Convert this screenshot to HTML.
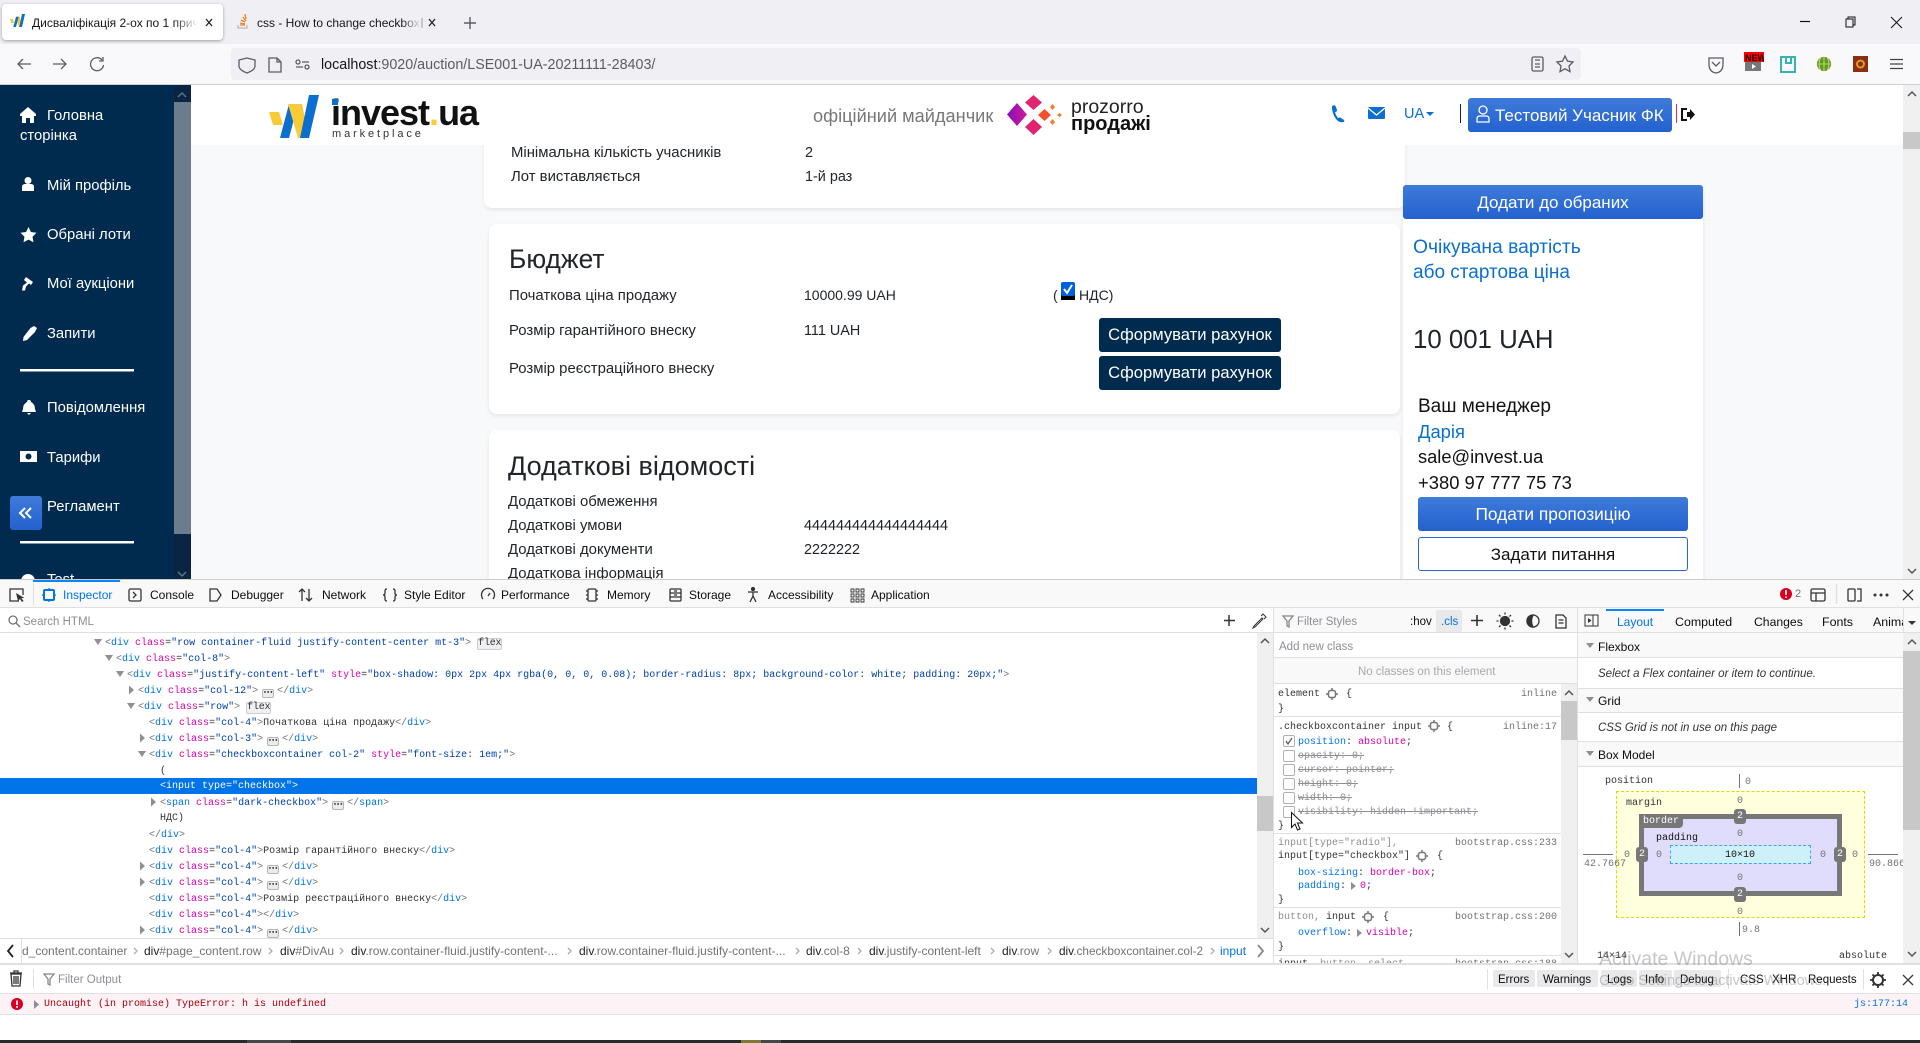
<!DOCTYPE html>
<html><head><meta charset="utf-8"><title>Дисваліфікація</title>
<style>
html,body{margin:0;padding:0;width:1920px;height:1043px;overflow:hidden;background:#fff;font-family:"Liberation Sans","Noto Sans CJK SC",sans-serif}
div,span.a{position:absolute}
.t{position:absolute;white-space:nowrap;line-height:16px;height:16px}
.r{position:absolute;box-sizing:border-box}
.side{color:#fff;font-size:14.8px;left:47px;margin-top:1px}
.pg{color:#212529;font-size:14.9px;margin-top:1px}
.val{font-size:14.4px}
.btn{position:absolute;box-sizing:border-box;text-align:center;color:#fff;background:linear-gradient(#3f7bd9,#2361cf);border-radius:3px;font-size:17px;line-height:35px}
.dark{position:absolute;box-sizing:border-box;left:1099px;width:182px;height:34px;text-align:center;color:#fff;background:#002a4e;border-radius:3px;font-size:16.6px;line-height:34px}
.card{position:absolute;background:#fff;border-radius:8px;box-shadow:0 2px 4px rgba(0,0,0,.08)}
.dv{font-size:12px;color:#0c0c0d}
.m{font-family:"Liberation Mono",monospace;font-size:10px;color:#333;position:absolute;white-space:pre;line-height:16px;height:16px;margin-top:2px}
.n{color:#0074e8}.k{color:#dd00a9}.v{color:#003eaa}.g{color:#737373}
.bd{display:inline-block;font-weight:normal;background:#f0f0f2;border:1px solid #cfcfd3;border-radius:2px;line-height:10px;height:10px;padding:0;letter-spacing:-.2px;color:#333;margin-left:6px;vertical-align:0}
.el{display:inline-block;box-sizing:border-box;font-weight:bold;background:#ececee;border:1px solid #b5b5b8;border-radius:2px;line-height:7px;height:9px;width:12px;text-align:center;font-size:5px;font-family:"DejaVu Sans",sans-serif;color:#333;vertical-align:-1px;margin:0 3px 0 4px;letter-spacing:0}
.h{position:absolute;left:0;height:1px;background:#e0e0e2}
.bc{font-size:12px;color:#737373}.bc b{font-weight:normal;color:#222}
.cb{position:absolute;left:1283px;width:10px;height:10px;border:1px solid #b1b1b3;border-radius:2px;background:#fff}
.s{color:#8e8e93;text-decoration:line-through}
.f{background:#e9e9eb;position:absolute;height:17px;top:970px;border-radius:2px}
.c{text-align:center}
.m.b2{margin-top:0;background:#777;border-radius:3px;color:#fff;line-height:15px;height:15px;width:12px}
</style></head><body>

<!-- browser chrome -->
<div class="r" style="left:0;top:0;width:1920px;height:44px;background:#f0f0f4"></div>
<div class="r" style="left:2px;top:4px;width:221px;height:36px;background:#fff;border-radius:4px;box-shadow:0 1px 3px rgba(0,0,0,.35)"></div>
<div class="t" style="left:32px;top:15px;width:166px;overflow:hidden;font-size:12px;color:#15141a;-webkit-mask-image:linear-gradient(90deg,#000 85%,transparent)">Дисваліфікація 2-ох по 1 прич</div>
<div class="t" style="left:257px;top:15px;width:164px;overflow:hidden;font-size:12px;color:#15141a;-webkit-mask-image:linear-gradient(90deg,#000 88%,transparent)">css - How to change checkbox</div>
<div class="r" style="left:0;top:44px;width:1920px;height:40px;background:#f9f9fb"></div>
<div class="r" style="left:231px;top:48px;width:1350px;height:32px;background:#f0f0f4;border-radius:4px"></div>
<div class="r" style="left:0;top:84px;width:1920px;height:1px;background:#cfcfd8"></div>
<div class="t" style="left:321px;top:57px;font-size:14.3px;color:#15141a">localhost<span style="color:#5b5b66">:9020/auction/LSE001-UA-20211111-28403/</span></div>

<svg style="position:absolute;left:0;top:0" width="1920" height="85" fill="none" stroke="#5b5b66" stroke-width="1.3">
<!-- tab favicons -->
<path d="M10 19h3l1.200 4h-3zM15.700 16.700h4.200L22 27h-3.300z" fill="#f9c933" stroke="none"/><path d="M13.300 27H16l2.700-10.300H16zM19.300 27H22l3-13h-3z" fill="#0a6fd0" stroke="none"/>
<path d="M206 19l6 7M212 19l-6 7M429 19l6 7M435 19l-6 7" stroke="#222"/>
<path d="M238 25v3h9v-3" stroke="#bcbbbb"/><path d="M240 25h5M240 23l5 1M241 20l4 2M243 17l3 4M245 14l1 5" stroke="#f48024"/>
<path d="M422 18v10" stroke="#b0b0b8"/>
<path d="M470 17v12M464 23h12" stroke="#5b5b66" stroke-width="1.4"/>
<!-- nav -->
<path d="M31 64H18M23 59l-5 5 5 5M53 64h13M61 59l5 5-5 5"/>
<path d="M102 60a6.500 6.500 0 1 0 1.500 5M103 57v4h-4"/>
<path d="M247 58l-8 2v6q0 4 8 7q8-3 8-7v-6zM269 58h8l4 4v10h-12zM277 58v4h4"/>
<circle cx="298" cy="62" r="2"/><path d="M302 62h7M296 67h7"/><circle cx="307" cy="67" r="2"/>
<rect x="1532" y="57" width="11" height="14" rx="1.500"/><path d="M1535 60h5M1535 64h5M1535 67h5"/>
<path d="M1565 56l2.500 5.200 5.500.8-4 4 1 5.600-5-2.800-5 2.800 1-5.600-4-4 5.500-.8z"/>
<path d="M1709 58h14v6q0 8-7 9q-7-1-7-9zM1712 62l4 4 4-4"/>
<!-- extensions -->
<rect x="1744" y="52" width="20" height="10" fill="#f00" stroke="none"/>
<rect x="1745" y="62" width="16" height="9" fill="#777" stroke="none"/><path d="M1752 64v5l4-2.500z" fill="#fff" stroke="none"/>
<path d="M1781 57h14v15h-14zM1786 57v6h5v-6" stroke="#35b3b3" stroke-width="2"/>
<circle cx="1824" cy="64" r="6.500" fill="#5f9a1a" stroke="#74a020"/><path d="M1824 57v14M1819 64h11M1820.500 58q-3 6 0 12M1827.500 58q3 6 0 12" stroke="#d6e6a0" stroke-width=".8"/>
<rect x="1853" y="56" width="15" height="16" fill="#8a2f12" stroke="none"/><circle cx="1860.500" cy="64" r="3.500" stroke="#f0a020" stroke-width="1.800"/>
<path d="M1890 59.500h13M1890 64h13M1890 68.500h13" stroke="#444"/>
<!-- window -->
<path d="M1800 21.500h10" stroke="#111" stroke-width="1.200"/>
<path d="M1846 19h7v8h-7zM1848 19v-2h7v8h-2" stroke="#111" stroke-width="1"/>
<path d="M1891 17l11 11M1902 17l-11 11" stroke="#111" stroke-width="1"/>
</svg>
<div class="t" style="left:1745px;top:50px;font-size:9px;font-weight:bold;color:#111;width:19px;overflow:hidden">NEW</div>

<!-- viewport -->
<div style="left:0;top:0;width:1920px;height:579px;overflow:hidden">
<div class="r" style="left:0;top:85px;width:1920px;height:494px;background:#f8f9fb"></div>

<!-- cards -->
<div class="card" style="left:484px;top:125px;width:921px;height:83px;border-radius:0 0 8px 8px"></div>
<div class="r" style="left:191px;top:85px;width:1712px;height:60px;background:#fff"></div>
<div class="t pg" style="left:511px;top:144px">Мінімальна кількість учасників</div><div class="t pg val" style="left:805px;top:144px">2</div>
<div class="t pg" style="left:511px;top:168px">Лот виставляється</div><div class="t pg val" style="left:805px;top:168px">1-й раз</div>

<div class="card" style="left:489px;top:224px;width:911px;height:190px"></div>
<div class="t pg" style="left:509px;top:250px;font-size:26.400px">Бюджет</div>
<div class="t pg" style="left:509px;top:287px">Початкова ціна продажу</div><div class="t pg" style="left:804px;top:286px;font-size:14px">10000.99 UAH</div>
<div class="t pg" style="left:1053px;top:286px;font-size:14px">(</div><div class="t pg" style="left:1079px;top:286px;font-size:14px">НДС)</div>
<div class="r" style="left:1061px;top:286px;width:14px;height:14px;background:#000"></div>
<div class="r" style="left:1061px;top:282px;width:14px;height:14px;background:#0060df;border-radius:2px"></div>
<svg style="position:absolute;left:1061px;top:282px" width="14" height="14" fill="none"><path d="M3 7l3 4 5-8" stroke="#fff" stroke-width="2"/></svg>
<div class="t pg" style="left:509px;top:322px">Розмір гарантійного внеску</div><div class="t pg val" style="left:804px;top:322px">111 UAH</div>
<div class="t pg" style="left:509px;top:360px">Розмір реєстраційного внеску</div>
<div class="dark" style="top:318px">Сформувати рахунок</div>
<div class="dark" style="top:356px">Сформувати рахунок</div>

<div class="card" style="left:489px;top:430px;width:911px;height:200px"></div>
<div class="t pg" style="left:508px;top:457px;font-size:27px">Додаткові відомості</div>
<div class="t pg" style="left:508px;top:493px">Додаткові обмеження</div>
<div class="t pg" style="left:508px;top:517px">Додаткові умови</div><div class="t pg" style="left:804px;top:517px;font-size:14.400px">444444444444444444</div>
<div class="t pg" style="left:508px;top:541px">Додаткові документи</div><div class="t pg" style="left:804px;top:541px;font-size:14.400px">2222222</div>
<div class="t pg" style="left:508px;top:565px">Додаткова інформація</div>

<!-- right card -->
<div class="card" style="left:1403px;top:185px;width:300px;height:420px;border-radius:3px"></div>
<div class="btn" style="left:1403px;top:185px;width:300px;height:34px">Додати до обраних</div>
<div class="t" style="left:1413px;top:240px;font-size:19.300px;color:#0a6fd0">Очікувана вартість</div>
<div class="t" style="left:1413px;top:265px;font-size:19px;color:#0a6fd0">або стартова ціна</div>
<div class="t" style="left:1413px;top:332px;font-size:25.800px;color:#212529">10 001 UAH</div>
<div class="t" style="left:1418px;top:399px;font-size:19px;color:#111">Ваш менеджер</div>
<div class="t" style="left:1418px;top:424px;font-size:18.400px;color:#0a6fd0">Дарія</div>
<div class="t" style="left:1418px;top:449px;font-size:18.300px;color:#111">sale@invest.ua</div>
<div class="t" style="left:1418px;top:475px;font-size:18.400px;color:#111">+380 97 777 75 73</div>
<div class="btn" style="left:1418px;top:497px;width:270px;height:34px;font-size:17.300px">Подати пропозицію</div>
<div class="btn" style="left:1418px;top:537px;width:270px;height:34px;background:#fff;border:1px solid #2b66cf;color:#111;line-height:33px">Задати питання</div>

<!-- header -->
<svg style="position:absolute;left:0;top:85px" width="1920" height="60" viewBox="0 85 1920 60">
<path d="M269 112h10l4 13h-10z" fill="#f9cc37"/>
<path d="M280 138h9l9-34h-9z" fill="#0a6fd0"/>
<path d="M288 104h14l7 34h-11z" fill="#f9cc37"/>
<path d="M300 138h9l10-43h-10z" fill="#0a6fd0"/>
<defs><linearGradient id="p" x1="0" x2="1"><stop offset="0" stop-color="#8312b9"/><stop offset="1" stop-color="#d5179b"/></linearGradient></defs>
<path d="M1017 103l10 11.500-10 11.500-10-11.500z" fill="url(#p)"/>
<path d="M1033.500 95l8.500 7.500-8.500 7.500-8.500-7.500z" fill="#e1246f"/>
<path d="M1033.500 119l8.500 8-8.500 8-8.500-8z" fill="#e1246f"/>
<path d="M1044.500 109l6.500 6-6.500 6-6.500-6z" fill="#f0512e"/>
<path d="M1052.500 104l2.500 3-2.500 3-2.500-3zM1052.500 119l2.500 3-2.500 3-2.500-3zM1059.500 113l2.500 2-2.500 2-2.500-2z" fill="#f47f20"/>
<path d="M1332 106q3-2 4 1l1 3q0 2-2 2l1 3 2 3q2-1 3 0l3 2q1 2-1 2-4 1-7-3t-4-10q0-2 0-3z" fill="#0a6fd0"/>
<rect x="1368" y="107" width="17" height="12" rx="1" fill="#0a6fd0"/><path d="M1368 108l8.500 7 8.500-7" fill="none" stroke="#fff" stroke-width="1.300"/>
<path d="M1426 112h8l-4 4z" fill="#0a6fd0"/>
<path d="M1460.500 104v19" stroke="#222"/>
<path d="M1676.500 104v19" stroke="#e33" stroke-width="1"/>
<path d="M1687 109h-5v11h5" fill="none" stroke="#111" stroke-width="2"/><path d="M1687 112h3v-3l5 5.500-5 5.500v-3h-3z" fill="#111"/>
</svg>
<div class="t" style="left:331px;top:98px;height:30px;line-height:30px;font-size:36px;font-weight:bold;letter-spacing:-1px;color:#111">invest<span style="color:#f9cc37">.</span>ua</div>
<svg style="position:absolute;left:332px;top:99px" width="6" height="6"><rect width="6" height="6" fill="#0a6fd0"/></svg>
<div class="t" style="left:332px;top:126px;font-size:11px;letter-spacing:2.900px;color:#333">marketplace</div>
<div class="t" style="left:813px;top:108px;font-size:18.200px;color:#777">офіційний майданчик</div>
<div class="t" style="left:1071px;top:99px;font-size:19.500px;color:#222">prozorro</div>
<div class="t" style="left:1071px;top:116px;font-size:20px;font-weight:bold;color:#111">продажі</div>
<div class="t" style="left:1404px;top:106px;font-size:14.500px;color:#0a6fd0">UA</div>
<div class="btn" style="left:1468px;top:98px;width:204px;height:34px;text-align:left;padding-left:27px;font-size:17px;border-radius:3px">Тестовий Учасник ФК</div>
<svg style="position:absolute;left:1474px;top:104px" width="20" height="22" fill="none" stroke="#fff" stroke-width="1.300"><circle cx="9" cy="6" r="4"/><path d="M3 18v-3q0-3 3-3h6q3 0 3 3v3z"/></svg>

<!-- sidebar -->
<div class="r" style="left:0;top:85px;width:174px;height:494px;background:#002a4e"></div>
<div class="r" style="left:174px;top:85px;width:17px;height:494px;background:#0a2444"></div>
<div class="r" style="left:174px;top:102px;width:17px;height:432px;background:#6b7d8d"></div>
<svg style="position:absolute;left:0;top:85px" width="191" height="494" viewBox="0 85 191 494" fill="#fff">
<path d="M178 97l4-4 4 4M178 572l4 4 4-4" fill="none" stroke="#5c7287" stroke-width="1.500"/>
<path d="M28 107l8 7v2h-2v7h-4v-5h-4v5h-4v-7h-2v-2z"/>
<circle cx="28" cy="180.500" r="3.500"/><path d="M22 191v-4q0-3 3-3h6q3 0 3 3v4z"/>
<path d="M28.500 227l2.400 5 5.600.8-4 4 1 5.500-5-2.700-5 2.700 1-5.500-4-4 5.600-.8z"/>
<path d="M26 277l7 5-2 3-2-1.500-3 3-1 4h-3l1-5 4-3-3-2.500z"/>
<path d="M34 326l3 2-2 4-8 8-4 1 .5-4 7-9z"/>
<path d="M29 400a2 2 0 0 1 2 2q4 2 4 7l1 3H22l1-3q0-5 4-7a2 2 0 0 1 2-2zM27 413h4l-2 2z"/>
<path d="M20 451h17v11H20z"/><circle cx="28.500" cy="456.500" r="3" fill="#002a4e"/>
<rect x="20" y="369" width="114" height="2.500"/>
<rect x="20" y="541" width="114" height="2.500"/>
<circle cx="28" cy="581" r="7"/>
</svg>
<div class="t side" style="top:107px">Головна</div>
<div class="t side" style="left:20px;top:127px">сторінка</div>
<div class="t side" style="top:177px">Мій профіль</div>
<div class="t side" style="top:226px">Обрані лоти</div>
<div class="t side" style="top:275px">Мої аукціони</div>
<div class="t side" style="top:325px">Запити</div>
<div class="t side" style="top:399px">Повідомлення</div>
<div class="t side" style="top:449px">Тарифи</div>
<div class="t side" style="top:498px">Регламент</div>
<div class="t side" style="top:571px">Test</div>
<div class="r" style="left:10px;top:496px;width:32px;height:34px;background:linear-gradient(#3f7bd9,#2361cf);border-radius:3px"></div>
<svg style="position:absolute;left:10px;top:496px" width="32" height="34" fill="none" stroke="#fff" stroke-width="2"><path d="M15 12l-5 5 5 5M21 12l-5 5 5 5"/></svg>

<!-- page scrollbar -->
<div class="r" style="left:1903px;top:85px;width:17px;height:494px;background:#f0f0f0"></div>
<div class="r" style="left:1903px;top:132px;width:17px;height:17px;background:#c8c8c8"></div>
<svg style="position:absolute;left:1903px;top:85px" width="17" height="494" fill="none" stroke="#555" stroke-width="1.500"><path d="M5 11l4-4 4 4M5 484l4 4 4-4"/></svg>
</div>

<!-- devtools -->
<div class="r" style="left:0;top:579px;width:1920px;height:461px;background:#fff"></div>
<div class="r" style="left:0;top:579px;width:1920px;height:29px;background:#f9f9fa;border-top:1px solid #ccc;border-bottom:1px solid #e0e0e2"></div>
<div class="r" style="left:33px;top:580px;width:87px;height:2px;background:#0a84ff"></div>
<div class="r" style="left:33px;top:583px;width:1px;height:22px;background:#e0e0e2"></div>
<div class="t dv" style="left:63px;top:587px;color:#0074e8">Inspector</div>
<div class="t dv" style="left:150px;top:587px">Console</div>
<div class="t dv" style="left:231px;top:587px">Debugger</div>
<div class="t dv" style="left:322px;top:587px">Network</div>
<div class="t dv" style="left:404px;top:587px">Style Editor</div>
<div class="t dv" style="left:501px;top:587px">Performance</div>
<div class="t dv" style="left:607px;top:587px">Memory</div>
<div class="t dv" style="left:689px;top:587px">Storage</div>
<div class="t dv" style="left:768px;top:587px">Accessibility</div>
<div class="t dv" style="left:871px;top:587px">Application</div>
<svg style="position:absolute;left:0;top:579px" width="1920" height="30" viewBox="0 579 1920 30" fill="none" stroke="#333" stroke-width="1.300">
<path d="M19 601h-9v-12h13v6"/><path d="M16 593l2 8 2-2 2 3 1.500-1-2-3h3z" fill="#333" stroke="none"/>
<rect x="44" y="590" width="10" height="10" rx="1" stroke="#0074e8" stroke-width="2"/><path d="M49 588v2M49 600v2M42 595h2M54 595h2" stroke="#0074e8"/>
<rect x="129" y="589" width="12" height="12" rx="1.500"/><path d="M133 592l3 3-3 3"/>
<path d="M210 589h7l4 6-4 6h-7z"/>
<path d="M302 601v-12M299 592l3-3 3 3M309 589v12M306 598l3 3 3-3"/>
<path d="M387 589q-2 0-2 2v2q0 2-2 2 2 0 2 2v2q0 2 2 2M393 589q2 0 2 2v2q0 2 2 2-2 0-2 2v2q0 2-2 2"/>
<path d="M483 599a6.500 6.500 0 1 1 10 0M488 596l2-3"/>
<rect x="588" y="589" width="8" height="12" rx="1"/><path d="M586 591h2M586 595h2M586 599h2M596 591h2M596 595h2M596 599h2"/>
<rect x="670" y="589" width="11" height="12" rx="1"/><path d="M670 593h11M670 597h11M674 591h3M674 595h3"/>
<circle cx="753" cy="589" r="1.500" fill="#333"/><path d="M748 592h10M753 592v4l-3 6M753 596l3 6"/>
<path d="M851 589h3v3h-3zM856 589h3v3h-3zM861 589h3v3h-3zM851 594h3v3h-3zM856 594h3v3h-3zM861 594h3v3h-3zM851 599h3v3h-3zM856 599h3v3h-3zM861 599h3v3h-3z" stroke-width=".9"/>
<circle cx="1786" cy="594" r="6" fill="#d70022" stroke="none"/><path d="M1786 590v5M1786 596.500v1.500" stroke="#fff" stroke-width="1.600"/>
<rect x="1811" y="589" width="14" height="12" rx="1.500"/><path d="M1811 593h14M1816 593v8"/>
<path d="M1836.500 584v20" stroke="#e0e0e2"/>
<rect x="1848" y="589" width="7" height="12" rx="1"/><path d="M1857 589h4v12h-4"/>
<circle cx="1875" cy="595" r="1.500" fill="#333" stroke="none"/><circle cx="1881" cy="595" r="1.500" fill="#333" stroke="none"/><circle cx="1887" cy="595" r="1.500" fill="#333" stroke="none"/>
<path d="M1903 590l10 10M1913 590l-10 10"/>
</svg>
<div class="t" style="left:1795px;top:586px;font-size:11px;color:#737373">2</div>

<!-- search row -->
<div class="r" style="left:0;top:632px;width:1920px;height:1px;background:#e0e0e2"></div>
<div class="t dv" style="left:23px;top:614px;color:#8e8e93;font-size:11.500px">Search HTML</div>
<svg style="position:absolute;left:0;top:608px" width="1274" height="25" fill="none" stroke="#737373" stroke-width="1.300">
<circle cx="13" cy="12" r="4"/><path d="M16 15l4 4"/>
<path d="M1229 7v11M1224 12.500h11" stroke="#333" stroke-width="1.500"/>
<path d="M1254 18l-1 2 2-1 8-8-1-1zM1261 8l2-2 3 3-2 2" stroke="#333" stroke-width="1"/>
</svg>

<!-- markup -->
<div class="r" style="left:0;top:778px;width:1257px;height:16px;background:#0074e8"></div>
<svg style="position:absolute;left:0;top:633px" width="200" height="305" fill="#8e8e93">
<!-- open arrows -->
<path d="M94 6h8l-4 6zM105 22h8l-4 6zM116 38h8l-4 6zM127 70h8l-4 6zM138 118h8l-4 6z"/>
<!-- closed arrows -->
<path d="M129 52.500v9l5-4.500zM140 100.500v9l5-4.500zM151 164.500v9l5-4.500zM140 228.500v9l5-4.500zM140 244.500v9l5-4.500zM140 292.500v9l5-4.500z"/>
</svg>
<div class="m" style="left:105px;top:634px"><span class="g">&lt;</span><span class="n">div</span> <span class="k">class</span>=<span class="v">"row container-fluid justify-content-center mt-3"</span><span class="g">&gt;</span><b class="bd">flex</b></div>
<div class="m" style="left:116px;top:650px"><span class="g">&lt;</span><span class="n">div</span> <span class="k">class</span>=<span class="v">"col-8"</span><span class="g">&gt;</span></div>
<div class="m" style="left:127px;top:666px"><span class="g">&lt;</span><span class="n">div</span> <span class="k">class</span>=<span class="v">"justify-content-left"</span> <span class="k">style</span>=<span class="v">"box-shadow: 0px 2px 4px rgba(0, 0, 0, 0.08); border-radius: 8px; background-color: white; padding: 20px;"</span><span class="g">&gt;</span></div>
<div class="m" style="left:138px;top:682px"><span class="g">&lt;</span><span class="n">div</span> <span class="k">class</span>=<span class="v">"col-12"</span><span class="g">&gt;</span><b class="el">•••</b><span class="g">&lt;/</span><span class="n">div</span><span class="g">&gt;</span></div>
<div class="m" style="left:138px;top:698px"><span class="g">&lt;</span><span class="n">div</span> <span class="k">class</span>=<span class="v">"row"</span><span class="g">&gt;</span><b class="bd">flex</b></div>
<div class="m" style="left:149px;top:714px"><span class="g">&lt;</span><span class="n">div</span> <span class="k">class</span>=<span class="v">"col-4"</span><span class="g">&gt;</span>Початкова ціна продажу<span class="g">&lt;/</span><span class="n">div</span><span class="g">&gt;</span></div>
<div class="m" style="left:149px;top:730px"><span class="g">&lt;</span><span class="n">div</span> <span class="k">class</span>=<span class="v">"col-3"</span><span class="g">&gt;</span><b class="el">•••</b><span class="g">&lt;/</span><span class="n">div</span><span class="g">&gt;</span></div>
<div class="m" style="left:149px;top:746px"><span class="g">&lt;</span><span class="n">div</span> <span class="k">class</span>=<span class="v">"checkboxcontainer col-2"</span> <span class="k">style</span>=<span class="v">"font-size: 1em;"</span><span class="g">&gt;</span></div>
<div class="m" style="left:160px;top:762px">(</div>
<div class="m" style="left:160px;top:777px;color:#fff">&lt;input type="checkbox"&gt;</div>
<div class="m" style="left:160px;top:794px"><span class="g">&lt;</span><span class="n">span</span> <span class="k">class</span>=<span class="v">"dark-checkbox"</span><span class="g">&gt;</span><b class="el">•••</b><span class="g">&lt;/</span><span class="n">span</span><span class="g">&gt;</span></div>
<div class="m" style="left:160px;top:809px">НДС)</div>
<div class="m" style="left:149px;top:826px"><span class="g">&lt;/</span><span class="n">div</span><span class="g">&gt;</span></div>
<div class="m" style="left:149px;top:842px"><span class="g">&lt;</span><span class="n">div</span> <span class="k">class</span>=<span class="v">"col-4"</span><span class="g">&gt;</span>Розмір гарантійного внеску<span class="g">&lt;/</span><span class="n">div</span><span class="g">&gt;</span></div>
<div class="m" style="left:149px;top:858px"><span class="g">&lt;</span><span class="n">div</span> <span class="k">class</span>=<span class="v">"col-4"</span><span class="g">&gt;</span><b class="el">•••</b><span class="g">&lt;/</span><span class="n">div</span><span class="g">&gt;</span></div>
<div class="m" style="left:149px;top:874px"><span class="g">&lt;</span><span class="n">div</span> <span class="k">class</span>=<span class="v">"col-4"</span><span class="g">&gt;</span><b class="el">•••</b><span class="g">&lt;/</span><span class="n">div</span><span class="g">&gt;</span></div>
<div class="m" style="left:149px;top:890px"><span class="g">&lt;</span><span class="n">div</span> <span class="k">class</span>=<span class="v">"col-4"</span><span class="g">&gt;</span>Розмір реєстраційного внеску<span class="g">&lt;/</span><span class="n">div</span><span class="g">&gt;</span></div>
<div class="m" style="left:149px;top:906px"><span class="g">&lt;</span><span class="n">div</span> <span class="k">class</span>=<span class="v">"col-4"</span><span class="g">&gt;&lt;/</span><span class="n">div</span><span class="g">&gt;</span></div>
<div class="m" style="left:149px;top:922px"><span class="g">&lt;</span><span class="n">div</span> <span class="k">class</span>=<span class="v">"col-4"</span><span class="g">&gt;</span><b class="el">•••</b><span class="g">&lt;/</span><span class="n">div</span><span class="g">&gt;</span></div>

<!-- markup scrollbar -->
<div class="r" style="left:1257px;top:633px;width:16px;height:305px;background:#f0f0f0"></div>
<div class="r" style="left:1257px;top:796px;width:16px;height:35px;background:#c8c8c8"></div>
<svg style="position:absolute;left:1257px;top:633px" width="16" height="305" fill="none" stroke="#555" stroke-width="1.500"><path d="M4 10l4-4 4 4M4 295l4 4 4-4"/></svg>

<!-- breadcrumbs -->
<div class="r" style="left:0;top:938px;width:1274px;height:1px;background:#e0e0e2"></div>
<div class="r" style="left:21px;top:939px;width:1px;height:24px;background:#e0e0e2"></div>
<div class="r" style="left:0;top:963px;width:1920px;height:2px;background:#e0e0e2"></div>
<div class="t bc" style="left:22px;top:943px">d_content.container</div>
<div class="t bc" style="left:144px;top:943px"><b>div</b>#page_content.row</div>
<div class="t bc" style="left:280px;top:943px"><b>div</b>#DivAu</div>
<div class="t bc" style="left:351px;top:943px"><b>div</b>.row.container-fluid.justify-content-...</div>
<div class="t bc" style="left:579px;top:943px"><b>div</b>.row.container-fluid.justify-content-...</div>
<div class="t bc" style="left:806px;top:943px"><b>div</b>.col-8</div>
<div class="t bc" style="left:869px;top:943px"><b>div</b>.justify-content-left</div>
<div class="t bc" style="left:1002px;top:943px"><b>div</b>.row</div>
<div class="t bc" style="left:1059px;top:943px;font-size:11.800px"><b>div</b>.checkboxcontainer.col-2</div>
<div class="t bc" style="left:1220px;top:943px;color:#0074e8">input</div>
<svg style="position:absolute;left:0;top:939px" width="1274" height="24" fill="none" stroke="#a9a9b3" stroke-width="1.300">
<path d="M134 9l3 3-3 3M269 9l3 3-3 3M340 9l3 3-3 3M568 9l3 3-3 3M796 9l3 3-3 3M858 9l3 3-3 3M991 9l3 3-3 3M1048 9l3 3-3 3M1211 9l3 3-3 3"/>
<path d="M13 6l-5 6 5 6" stroke="#222" stroke-width="1.800"/><path d="M1258 6l5 6-5 6" stroke="#888" stroke-width="1.800"/>
</svg>

<!-- rules panel -->
<div class="r" style="left:1273px;top:608px;width:1px;height:355px;background:#e0e0e2"></div>
<div class="r" style="left:1577px;top:608px;width:1px;height:355px;background:#e0e0e2"></div>
<div class="r" style="left:1274px;top:608px;width:303px;height:25px;background:#f9f9fa"></div>
<div class="h" style="left:1274px;top:632px;width:303px"></div>
<div class="h" style="left:1274px;top:657px;width:303px"></div>
<div class="r" style="left:1274px;top:658px;width:303px;height:25px;background:#f9f9fa"></div>
<div class="h" style="left:1274px;top:683px;width:303px"></div>
<div class="r" style="left:1436px;top:610px;width:26px;height:22px;background:#e9e9eb;border-radius:2px"></div>
<div class="t dv" style="left:1297px;top:614px;color:#8e8e93;font-size:11.500px">Filter Styles</div>
<div class="t dv" style="left:1410px;top:614px;font-size:11.500px">:hov</div>
<div class="t dv" style="left:1441px;top:614px;color:#0074e8;font-size:11.500px">.cls</div>
<div class="t dv" style="left:1279px;top:639px;color:#8e8e93;font-size:11.500px">Add new class</div>
<div class="t dv" style="left:1358px;top:664px;color:#a9a9ae;font-size:11.500px">No classes on this element</div>
<svg style="position:absolute;left:1274px;top:608px" width="304" height="25" fill="none" stroke="#333" stroke-width="1.300">
<path d="M9 8h10l-4 5v6l-2-1v-5z" stroke="#888"/>
<path d="M203 7v11M197 12.500h12" stroke-width="1.600"/>
<circle cx="231" cy="13" r="4.500" fill="#333"/><path d="M231 4.500v2M231 19.500v2M222.500 13h2M237.500 13h2M225 7l1.500 1.500M235.500 17.500L237 19M225 19l1.500-1.500M235.500 8.500L237 7"/>
<circle cx="259" cy="13" r="6"/><path d="M259 7a6 6 0 0 1 0 12q3-6 0-12z" fill="#333" transform="rotate(180 259 13)"/>
<path d="M282 7h7l3 3v10h-10zM284.500 12h5M284.500 15h5"/>
</svg>

<div class="h" style="left:1274px;top:716px;width:287px"></div>
<div class="h" style="left:1274px;top:833px;width:287px"></div>
<div class="h" style="left:1274px;top:907px;width:287px"></div>
<div class="h" style="left:1274px;top:955px;width:287px"></div>
<div style="left:1274px;top:684px;width:287px;height:279px;overflow:hidden">
<div class="m" style="left:4px;top:1px">element<span style="margin-left:26px">{</span></div>
<div class="m" style="left:4px;top:16px">}</div>
<div class="m" style="left:4px;top:34px">.checkboxcontainer input<span style="margin-left:25px">{</span></div>
<div class="m" style="left:24px;top:49px"><span class="n">position</span>: <span class="k">absolute</span>;</div>
<div class="m s" style="left:24px;top:63px">opacity: 0;</div>
<div class="m s" style="left:24px;top:77px">cursor: pointer;</div>
<div class="m s" style="left:24px;top:91px">height: 0;</div>
<div class="m s" style="left:24px;top:105px">width: 0;</div>
<div class="m s" style="left:24px;top:119px">visibility: hidden !important;</div>
<div class="m" style="left:4px;top:133px">}</div>
<div class="m" style="left:4px;top:150px"><span style="color:#8e8e93">input[type="radio"],</span></div>
<div class="m" style="left:4px;top:163px">input[type="checkbox"]<span style="margin-left:27px">{</span></div>
<div class="m" style="left:24px;top:180px"><span class="n">box-sizing</span>: <span class="k">border-box</span>;</div>
<div class="m" style="left:24px;top:193px"><span class="n">padding</span>:<span class="k" style="margin-left:14px">0</span>;</div>
<div class="m" style="left:4px;top:207px">}</div>
<div class="m" style="left:4px;top:224px"><span style="color:#8e8e93">button,</span> input<span style="margin-left:27px">{</span></div>
<div class="m" style="left:24px;top:240px"><span class="n">overflow</span>:<span class="k" style="margin-left:14px">visible</span>;</div>
<div class="m" style="left:4px;top:254px">}</div>
<div class="m" style="left:4px;top:271px">input, <span style="color:#8e8e93">button, select</span></div>
<div class="m g" style="left:181px;top:271px">bootstrap.css:188</div>
<div class="m g" style="left:247px;top:1px">inline</div>
<div class="m g" style="left:229px;top:34px">inline:17</div>
<div class="m g" style="left:181px;top:150px">bootstrap.css:233</div>
<div class="m g" style="left:181px;top:224px">bootstrap.css:200</div>
</div>
<svg style="position:absolute;left:1274px;top:684px" width="304" height="279" fill="none" stroke="#777" stroke-width="1.500">
<rect x="54.500" y="6.500" width="7" height="7" rx="2"/><path d="M58 4v2.500M58 13.500V16M52 10h2.500M61.500 10H64"/>
<rect x="156.500" y="38.500" width="7" height="7" rx="2"/><path d="M160 36v2.500M160 45.500V48M154 42h2.500M163.500 42H166"/>
<rect x="144.500" y="168.500" width="7" height="7" rx="2"/><path d="M148 166v2.500M148 175.500V178M142 172h2.500M151.500 172H154"/>
<rect x="90.500" y="229.500" width="7" height="7" rx="2"/><path d="M94 227v2.500M94 236.500V239M88 233h2.500M97.500 233H100"/>
<path d="M77 198v8l5-4zM83 245v8l5-4z" fill="#8e8e93" stroke="none"/>
</svg>
<div class="cb" style="top:735px"></div>
<div class="cb" style="top:750px"></div>
<div class="cb" style="top:764px"></div>
<div class="cb" style="top:778px"></div>
<div class="cb" style="top:792px"></div>
<div class="cb" style="top:806px"></div>
<svg style="position:absolute;left:1283px;top:735px" width="12" height="12" fill="none"><path d="M3 6l2 3 4-6" stroke="#555" stroke-width="1.200"/></svg>
<div class="r" style="left:1561px;top:684px;width:16px;height:279px;background:#f0f0f0"></div>
<div class="r" style="left:1561px;top:701px;width:16px;height:39px;background:#c8c8c8"></div>
<svg style="position:absolute;left:1561px;top:684px" width="16" height="279" fill="none" stroke="#555" stroke-width="1.500"><path d="M4 11l4-4 4 4M4 269l4 4 4-4"/></svg>

<!-- layout panel -->
<div class="r" style="left:1578px;top:608px;width:342px;height:25px;background:#f9f9fa"></div>
<div class="h" style="left:1578px;top:632px;width:342px"></div>
<div class="r" style="left:1606px;top:609px;width:58px;height:2px;background:#0a84ff"></div>
<div class="t dv" style="left:1617px;top:614px;color:#0074e8">Layout</div>
<div class="t dv" style="left:1675px;top:614px;font-size:12.400px">Computed</div>
<div class="t dv" style="left:1754px;top:614px;font-size:12.200px">Changes</div>
<div class="t dv" style="left:1822px;top:614px;font-size:12.400px">Fonts</div>
<div class="t dv" style="left:1873px;top:614px;width:31px;overflow:hidden;font-size:12.400px">Animations</div>
<div class="r" style="left:1578px;top:633px;width:325px;height:25px;background:#f9f9fa;border-bottom:1px solid #e0e0e2"></div>
<div class="r" style="left:1578px;top:688px;width:325px;height:25px;background:#f9f9fa;border-top:1px solid #e0e0e2;border-bottom:1px solid #e0e0e2"></div>
<div class="r" style="left:1578px;top:741px;width:325px;height:26px;background:#f9f9fa;border-top:1px solid #e0e0e2;border-bottom:1px solid #e0e0e2"></div>
<div class="t dv" style="left:1598px;top:639px">Flexbox</div>
<div class="t dv" style="left:1598px;top:666px;font-style:italic;font-size:11.500px;color:#333">Select a Flex container or item to continue.</div>
<div class="t dv" style="left:1598px;top:693px">Grid</div>
<div class="t dv" style="left:1598px;top:720px;font-style:italic;font-size:11.500px;color:#333">CSS Grid is not in use on this page</div>
<div class="t dv" style="left:1598px;top:747px">Box Model</div>
<svg style="position:absolute;left:1578px;top:608px" width="342" height="160" fill="#8e8e93">
<path d="M8 35h8l-4 5zM8 89h8l-4 5zM8 143h8l-4 5z"/>
<path d="M7 7h13v11H7z" fill="none" stroke="#333"/><path d="M15 7v11" stroke="#333"/><path d="M10 10v5l3.500-2.500z" fill="#333"/>
<path d="M330 13h8l-4 4z" fill="#333"/>
<path d="M325.500 0v25" stroke="#e0e0e2"/>
</svg>

<!-- box model -->
<div class="m" style="left:1605px;top:772px">position</div>
<div class="r" style="left:1739px;top:774px;width:1px;height:14px;background:#737373"></div>
<div class="m g" style="left:1745px;top:773px">0</div>
<div class="r" style="left:1616px;top:791px;width:249px;height:127px;background:#ffffdd;border:1px dashed #dcdc00"></div>
<div class="m" style="left:1626px;top:794px">margin</div>
<div class="m g" style="left:1737px;top:792px">0</div>
<div class="r" style="left:1639px;top:814px;width:203px;height:82px;background:#e0dcfc;border:5px solid #777"></div>
<div class="r" style="left:1643px;top:814px;width:40px;height:14px;background:#777;border-radius:0 0 4px 0"></div>
<div class="m" style="left:1643px;top:812px;color:#fff">border</div>
<div class="m" style="left:1656px;top:829px;color:#111">padding</div>
<div class="m g" style="left:1737px;top:825px">0</div>
<div class="r" style="left:1670px;top:845px;width:141px;height:19px;background:#cdf0f9;border:1px dashed #3ea0ff"></div>
<div class="m" style="left:1725px;top:846px;color:#111">10×10</div>
<div class="m g" style="left:1656px;top:846px">0</div>
<div class="m g" style="left:1820px;top:846px">0</div>
<div class="m g" style="left:1737px;top:869px">0</div>
<div class="m g" style="left:1624px;top:846px">0</div>
<div class="m g" style="left:1852px;top:846px">0</div>
<div class="m g" style="left:1737px;top:903px">0</div>
<div class="c m b2" style="left:1734px;top:809px">2</div>
<div class="c m b2" style="left:1734px;top:887px">2</div>
<div class="c m b2" style="left:1636px;top:847px">2</div>
<div class="c m b2" style="left:1834px;top:847px">2</div>
<div class="r" style="left:1583px;top:854px;width:30px;height:1px;background:#737373"></div>
<div class="m g" style="left:1584px;top:855px">42.7667</div>
<div class="r" style="left:1868px;top:854px;width:30px;height:1px;background:#737373"></div>
<div class="m g" style="left:1869px;top:855px;width:34px;overflow:hidden">90.8667</div>
<div class="r" style="left:1739px;top:922px;width:1px;height:14px;background:#737373"></div>
<div class="m g" style="left:1742px;top:921px">9.8</div>
<div class="m" style="left:1597px;top:947px">14×14</div>
<div class="m" style="left:1839px;top:947px">absolute</div>
<div class="r" style="left:1903px;top:633px;width:17px;height:330px;background:#f0f0f0"></div>
<div class="r" style="left:1903px;top:651px;width:17px;height:179px;background:#c8c8c8"></div>
<svg style="position:absolute;left:1903px;top:633px" width="17" height="330" fill="none" stroke="#555" stroke-width="1.500"><path d="M5 11l4-4 4 4M5 319l4 4 4-4"/></svg>

<!-- console toolbar -->
<div class="r" style="left:33px;top:969px;width:1px;height:20px;background:#e0e0e2"></div>
<div class="r" style="left:1487px;top:969px;width:1px;height:20px;background:#e0e0e2"></div>
<div class="r" style="left:1728px;top:969px;width:1px;height:20px;background:#e0e0e2"></div>
<div class="r" style="left:1863px;top:969px;width:1px;height:20px;background:#e0e0e2"></div>
<div class="h" style="top:993px;width:1920px"></div>
<div class="t dv" style="left:58px;top:972px;color:#8e8e93;font-size:11.500px">Filter Output</div>
<div class="f" style="left:1493px;width:42px"></div><div class="f" style="left:1537px;width:61px"></div><div class="f" style="left:1601px;width:36px"></div><div class="f" style="left:1639px;width:33px"></div><div class="f" style="left:1674px;width:47px"></div>
<div class="t dv" style="left:1498px;top:972px;font-size:11.500px">Errors</div>
<div class="t dv" style="left:1543px;top:972px;font-size:11.500px">Warnings</div>
<div class="t dv" style="left:1607px;top:972px;font-size:11.500px">Logs</div>
<div class="t dv" style="left:1645px;top:972px;font-size:11.500px">Info</div>
<div class="t dv" style="left:1680px;top:972px;font-size:11.500px">Debug</div>
<div class="t dv" style="left:1740px;top:972px;font-size:11.500px">CSS</div>
<div class="t dv" style="left:1772px;top:972px;font-size:11.500px">XHR</div>
<div class="t dv" style="left:1808px;top:972px;font-size:11.500px">Requests</div>
<svg style="position:absolute;left:0;top:965px" width="1920" height="30" fill="none" stroke="#333" stroke-width="1.300">
<path d="M10 8h12M14 8V6h4v2M11 9l1 12h8l1-12zM14 11v8M16 11v8M18 11v8"/>
<path d="M44 9h10l-4 5v6l-2-1v-5z" stroke="#888"/>
<circle cx="1878" cy="15" r="5" stroke-width="2"/><path d="M1878 7v3M1878 20v3M1870 15h3M1883 15h3M1872.500 9.500l2 2M1881.500 18.500l2 2M1872.500 20.500l2-2M1881.500 11.500l2-2" stroke-width="1.800"/>
<path d="M1903 10l10 10M1913 10l-10 10"/>
</svg>

<!-- error row -->
<div class="r" style="left:0;top:994px;width:1920px;height:20px;background:#fdf2f5"></div>
<div class="h" style="top:1014px;width:1920px"></div>
<svg style="position:absolute;left:0;top:994px" width="50" height="20"><circle cx="17" cy="10" r="6" fill="#d70022"/><path d="M17 6.500v4.500M17 12v1.800" stroke="#fff" stroke-width="1.700"/><path d="M34 6v9l5-4.500z" fill="#8e8e93"/></svg>
<div class="m" style="left:44px;top:995px;color:#a4000f">Uncaught (in promise) TypeError: h is undefined</div>
<div class="m" style="left:1854px;top:995px;color:#0074e8">js:177:14</div>
<div class="r" style="left:0;top:1040px;width:1920px;height:3px;background:#232d2c"></div>
<div class="r" style="left:247px;top:1040px;width:44px;height:3px;background:#3f4a49"></div>
<div class="r" style="left:741px;top:1040px;width:20px;height:3px;background:#7b7b35"></div>
<div class="r" style="left:761px;top:1040px;width:20px;height:3px;background:#3f4a49"></div>

<!-- watermark -->
<div class="t" style="left:1599px;top:949px;height:20px;line-height:20px;font-size:19.500px;color:rgba(120,120,120,.42)">Activate Windows</div>
<div class="t" style="left:1599px;top:973px;font-size:14.400px;color:rgba(120,120,120,.42)">Go to Settings to activate Windows.</div>

<!-- cursor -->
<svg style="position:absolute;left:1290px;top:811px" width="14" height="21"><path d="M1.500 1.500v15l3.500-3.500 2.500 6 2.500-1-2.500-6h5z" fill="#fff" stroke="#111" stroke-width="1"/></svg>
</body></html>
